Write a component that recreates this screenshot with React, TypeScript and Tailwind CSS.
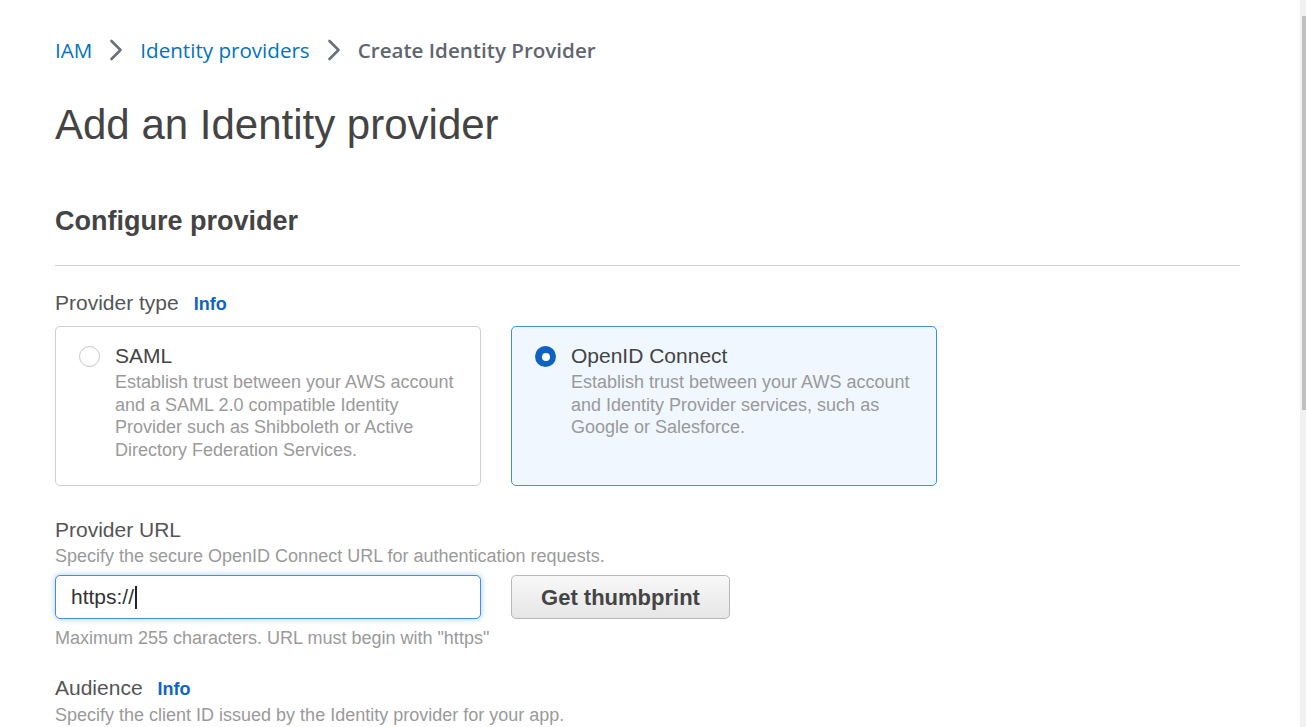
const arial = 'font-["Liberation_Sans",Arial,sans-serif]'

function InfoLink() {
  return <span className="ml-[15px] text-[18px] font-bold text-[#0f65c2]">Info</span>
}

function Chevron() {
  return (
    <svg className="mx-[17px] h-[22px] w-[14px] text-[#687078]" viewBox="0 0 14 22" fill="none" stroke="currentColor" strokeWidth={2.6} strokeLinecap="round" strokeLinejoin="round">
      <path d="M2.5 2 L11.5 11 L2.5 20" />
    </svg>
  )
}

function Radio({ checked }: { checked: boolean }) {
  if (checked) {
    return (
      <span className="flex h-[21px] w-[21px] shrink-0 items-center justify-center rounded-full bg-[#0f62bf]">
        <span className="block h-[8px] w-[8px] rounded-full bg-white" />
      </span>
    )
  }
  return <span className="block h-[21px] w-[21px] shrink-0 rounded-full border-[1.5px] border-[#c4c4c4] bg-white" />
}

interface ProviderOption {
  title: string
  text: string
  selected: boolean
}

const options: ProviderOption[] = [
  {
    title: 'SAML',
    text: 'Establish trust between your AWS account and a SAML 2.0 compatible Identity Provider such as Shibboleth or Active Directory Federation Services.',
    selected: false,
  },
  {
    title: 'OpenID Connect',
    text: 'Establish trust between your AWS account and Identity Provider services, such as Google or Salesforce.',
    selected: true,
  },
]

export default function App() {
  return (
    <div className={`flex min-h-[727px] bg-white ${arial}`}>
      <main className="flex-1 pl-[55px] pr-[60px]">
        {/* Breadcrumb */}
        <nav className='flex items-center pt-[38px] text-[20.6px] leading-[24px] font-["Open_Sans","Noto_Sans",sans-serif]'>
          <span className="text-[#0073bb]">IAM</span>
          <Chevron />
          <span className="text-[#0073bb]">Identity providers</span>
          <Chevron />
          <span className="font-semibold text-[#5f6670]">Create Identity Provider</span>
        </nav>

        <h1 className="mt-[39px] text-[42px] leading-[48px] text-[#444]">Add an Identity provider</h1>

        <h2 className="mt-[56px] text-[27px] leading-[32px] font-bold text-[#444]">Configure provider</h2>
        <div className="mt-[28px] border-t border-[#cfcfcf]" />

        <div className="mt-[25px] flex items-baseline text-[21px] leading-[24px] text-[#555]">
          Provider type <InfoLink />
        </div>

        <div className="mt-[10px] flex gap-[30px]">
          {options.map((o) => (
            <div
              key={o.title}
              className={`flex w-[426px] gap-[15px] rounded-[5px] border pl-[23px] pr-[20px] pt-[17px] pb-[24px] ${
                o.selected ? 'border-[#3f8fe4] bg-[#f0f7ff]' : 'border-[#cfcfcf] bg-white'
              }`}
            >
              <div className="pt-[2px]">
                <Radio checked={o.selected} />
              </div>
              <div className="flex-1">
                <div className="text-[21px] leading-[24px] text-[#444]">{o.title}</div>
                <p className="mt-[3px] text-[18px] leading-[22.5px] text-[#9a9a9a]">{o.text}</p>
              </div>
            </div>
          ))}
        </div>

        <div className="mt-[32px] text-[21px] leading-[24px] text-[#555]">Provider URL</div>
        <p className="mt-[3px] text-[18px] leading-[22px] text-[#9a9a9a]">
          Specify the secure OpenID Connect URL for authentication requests.
        </p>

        <div className="mt-[8px] flex gap-[30px]">
          <div className="flex h-[44px] w-[426px] items-center rounded-[5px] border border-[#3f8fe4] bg-white pl-[15px] text-[21px] text-[#333] shadow-[0_0_6px_rgba(63,143,228,0.45)]">
            https://<span className="ml-[1px] block h-[23px] w-[1.5px] bg-[#222]" />
          </div>
          <button className="h-[44px] w-[219px] rounded-[5px] border border-[#b8b8b8] bg-gradient-to-b from-[#f8f8f8] to-[#e6e6e6] text-[22px] font-bold text-[#444]">
            Get thumbprint
          </button>
        </div>

        <p className="mt-[8px] text-[18px] leading-[22px] text-[#9a9a9a]">
          Maximum 255 characters. URL must begin with "https"
        </p>

        <div className="mt-[27px] flex items-baseline text-[21px] leading-[24px] text-[#555]">
          Audience <InfoLink />
        </div>
        <p className="mt-[3px] text-[18px] leading-[22px] text-[#9a9a9a]">
          Specify the client ID issued by the Identity provider for your app.
        </p>
      </main>

      {/* Page scrollbar */}
      <div className="w-[6px] shrink-0 bg-[#f1f1f1]">
        <div className="ml-[2px] mt-[16px] h-[394px] w-[4px] bg-[#c1c1c1]" />
      </div>
    </div>
  )
}
